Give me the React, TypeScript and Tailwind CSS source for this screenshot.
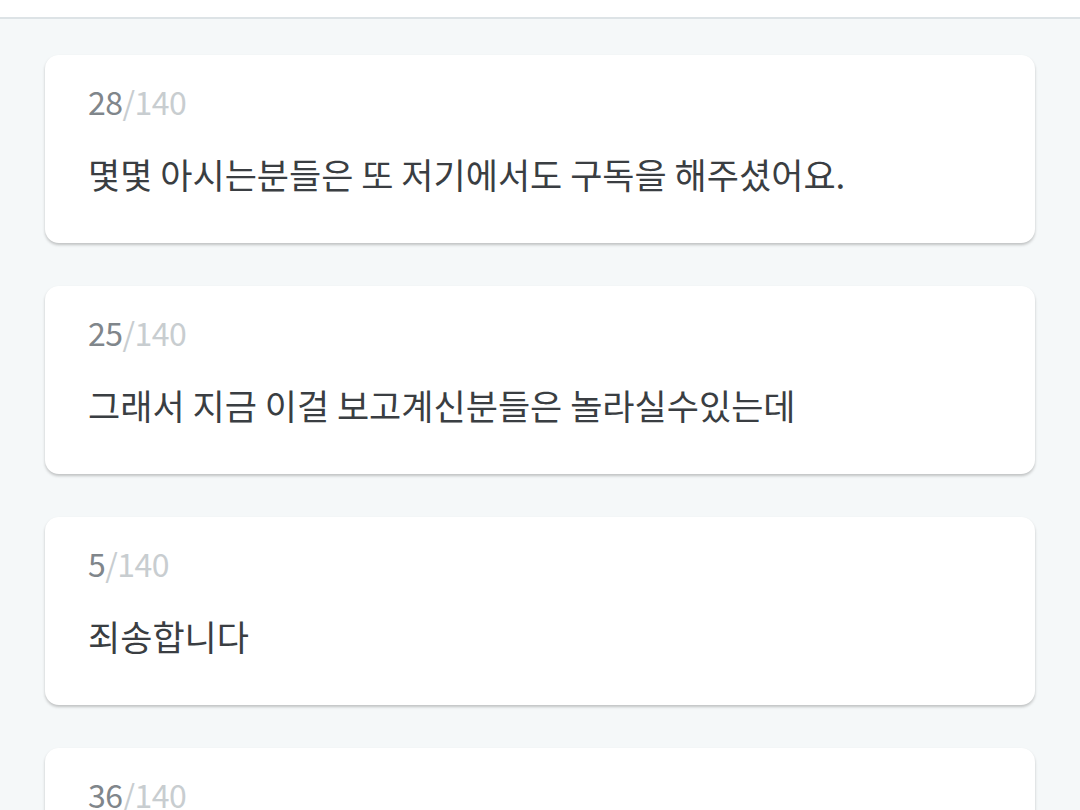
import React from "react";

const items = [
  { n: 28, t: "몇몇 아시는분들은 또 저기에서도 구독을 해주셨어요." },
  { n: 25, t: "그래서 지금 이걸 보고계신분들은 놀라실수있는데" },
  { n: 5, t: "죄송합니다" },
  { n: 36, t: "" },
];

export default function App() {
  return (
    <div className="w-[1080px] h-[810px] overflow-hidden bg-[#f5f8f9]" style={{ fontFamily: '"Noto Sans CJK KR", "Noto Sans", sans-serif' }}>
      <div className="h-[19px] bg-white border-b-2 border-[#dde3e6]" />
      <div className="flex flex-col gap-[43px] px-[45px] pt-[36px]">
        {items.map((it, i) => (
          <div key={i} className="h-[188px] shrink-0 rounded-[14px] bg-white shadow-[0_2px_3px_rgba(0,0,0,0.22)] pl-[43px] pt-[26px]">
            <div className="text-[32px] leading-[40px] text-[#80868b] tracking-[-0.5px]">
              {it.n}
              <span className="text-[#c8cdd0]">/140</span>
            </div>
            <div className="mt-[33px] text-[35px] leading-[40px] text-[#3a3e42]">{it.t}</div>
          </div>
        ))}
      </div>
    </div>
  );
}
